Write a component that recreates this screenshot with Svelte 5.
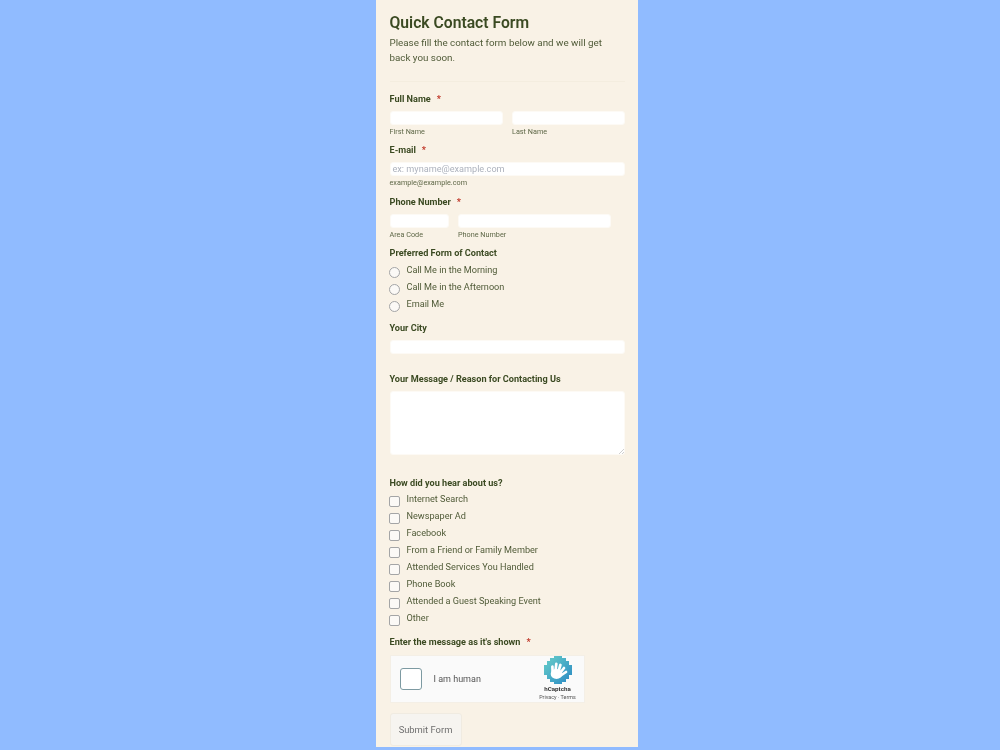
<script>
  const radios = ['Call Me in the Morning', 'Call Me in the Afternoon', 'Email Me'];
  const checks = ['Internet Search', 'Newspaper Ad', 'Facebook', 'From a Friend or Family Member', 'Attended Services You Handled', 'Phone Book', 'Attended a Guest Speaking Event', 'Other'];
</script>

<div class="page">
  <form class="card">
    <h1>Quick Contact Form</h1>
    <p class="sub">Please fill the contact form below and we will get back you soon.</p>
    <div class="rule"></div>

    <div class="label first">Full Name<span class="req">*</span></div>
    <div class="row">
      <div class="col half"><div class="input"></div><div class="hint">First Name</div></div>
      <div class="col half"><div class="input"></div><div class="hint">Last Name</div></div>
    </div>

    <div class="label l2">E-mail<span class="req">*</span></div>
    <div class="input email">ex: myname@example.com</div>
    <div class="hint">example@example.com</div>

    <div class="label l3">Phone Number<span class="req">*</span></div>
    <div class="row phone">
      <div class="col area"><div class="input"></div><div class="hint">Area Code</div></div>
      <div class="col num"><div class="input"></div><div class="hint">Phone Number</div></div>
    </div>

    <div class="label l4">Preferred Form of Contact</div>
    <div class="opts o1">
      {#each radios as r}
        <div class="opt"><span class="radio"></span><span class="opt-text">{r}</span></div>
      {/each}
    </div>

    <div class="label l5">Your City</div>
    <div class="input city"></div>

    <div class="label l6">Your Message / Reason for Contacting Us</div>
    <div class="textarea">
      <svg class="grip" width="5" height="5" viewBox="0 0 5 5"><path d="M0 5L5 0M3 5L5 3" stroke="#bbb" stroke-width=".7" fill="none"/></svg>
    </div>

    <div class="label l7">How did you hear about us?</div>
    <div class="opts o2">
      {#each checks as c}
        <div class="opt"><span class="check"></span><span class="opt-text">{c}</span></div>
      {/each}
    </div>

    <div class="label l8">Enter the message as it's shown<span class="req">*</span></div>
    <div class="captcha">
      <span class="cbox"></span>
      <span class="human">I am human</span>
      <div class="brand">
        <svg width="28" height="28" viewBox="0 0 28 28">
          <defs>
            <linearGradient id="hc" x1="0" y1="0" x2="1" y2="1">
              <stop offset="0.2" stop-color="#5cc2c8" />
              <stop offset="0.9" stop-color="#2f8fc4" />
            </linearGradient>
          </defs>
          <path d="M10 0h8v2h4v3h3v4h3v10h-3v4h-3v3h-4v2h-8v-2H6v-3H3v-4H0V9h3V5h3V2h4z" fill="url(#hc)"/>
          <ellipse cx="12.5" cy="18" rx="5.8" ry="5" fill="#fff"/>
          <path d="M8.6 16L8.4 10.5M11.5 15L12.3 7.8M14.5 15.5L16.4 9M16.5 16.5L20 12M16 20L22 16" stroke="#fff" stroke-width="2.7" stroke-linecap="round" fill="none"/>
        </svg>
        <div class="hc">hCaptcha</div>
        <div class="terms">Privacy · Terms</div>
      </div>
    </div>

    <button type="button" class="submit">Submit Form</button>
  </form>
</div>

<style>
  :global(body) { margin: 0; background: #90bbff; overflow: hidden; }
  .page { height: 750px; display: flex; justify-content: center; overflow: hidden; padding-left: 14px; box-sizing: border-box; filter: blur(0.5px); }
  .card { width: 262px; height: 747px; box-sizing: border-box; background: #f9f2e6; padding: 14px 13px 0 13.5px; font-family: Roboto, "Liberation Sans", sans-serif; color: #3c4a26; overflow: hidden; flex: none; }
  h1 { margin: 0; font-size: 15.7px; line-height: 18px; font-weight: 600; color: #3b4a22; }
  .sub { margin: 3px 0 0; font-size: 9.8px; line-height: 15px; color: #505b38; }
  .rule { height: 1px; background: #f4eddf; margin: 16px 0 0; }
  .label { font-size: 9.15px; line-height: 12px; font-weight: 700; color: #3b4a22; }
  .req { color: #c0392b; margin-left: 6px; }
  .first { margin-top: 11px; }
  .l2 { margin-top: 8px; }
  .l3 { margin-top: 8.5px; }
  .l4 { margin-top: 8.5px; }
  .l5 { margin-top: 7.5px; }
  .l6 { margin-top: 19px; }
  .l7 { margin-top: 21.5px; }
  .l8 { margin-top: 7.5px; }
  .row { display: flex; gap: 9.5px; margin-top: 6px; }
  .col.half { flex: 1; }
  .area { width: 59px; }
  .num { width: 153px; }
  .input { height: 12px; background: #fff; border: 1px solid #fdfaf5; border-radius: 3px; }
  .email { margin-top: 6px; padding-left: 2px; font-size: 9.15px; line-height: 12px; color: #adb2bd; }
  .city { margin-top: 6px; }
  .hint { font-size: 7.25px; line-height: 9px; margin-top: 2px; color: #5f6848; }
  .o1 { margin-top: 4.5px; }
  .o2 { margin-top: 4px; }
  .opt { display: flex; gap: 6.5px; height: 17px; align-items: flex-start; }
  .opt-text { font-size: 9.13px; line-height: 12px; color: #505b38; }
  .radio, .check { width: 9px; height: 9px; margin: 3.5px 0 0 -0.5px; flex: none; border: 1.2px solid #a4a5a6; background: #fbf9f6; box-sizing: content-box; }
  .radio { border-radius: 50%; }
  .check { border-radius: 2px; }
  .textarea { position: relative; margin-top: 6px; height: 62px; background: #fff; border: 1px solid #fdfaf5; border-radius: 3px; }
  .grip { position: absolute; right: 0; bottom: 0; }
  .captcha { margin-top: 6.5px; width: 195px; height: 48px; box-sizing: border-box; background: #fafafa; border: 1px solid #f4efe6; display: flex; align-items: center; font-family: Roboto, sans-serif; }
  .cbox { width: 20px; height: 20px; margin-left: 9px; border: 1px solid #7d9aa2; border-radius: 3px; background: #fff; flex: none; }
  .human { margin-left: 12px; font-size: 9px; color: #555; flex: 1; }
  .brand { width: 44px; margin-right: 4px; display: flex; flex-direction: column; align-items: center; }
  .hc { font-size: 6.2px; line-height: 8px; font-weight: 700; color: #333; margin-top: 1px; }
  .terms { font-size: 5.4px; line-height: 8px; color: #555; white-space: nowrap; }
  .submit { display: block; margin-top: 10px; width: 72px; height: 33px; padding: 0; background: #f6f4f0; border: 1px solid #f0ebe1; border-radius: 3px; font-family: Roboto, sans-serif; font-size: 9.4px; color: #6e6e6e; }
</style>
